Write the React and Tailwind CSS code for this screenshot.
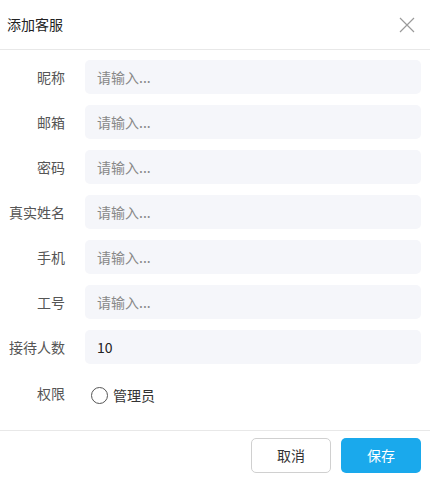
import { useState } from 'react'

const FIELDS = [
  { label: '昵称', value: '' },
  { label: '邮箱', value: '' },
  { label: '密码', value: '' },
  { label: '真实姓名', value: '' },
  { label: '手机', value: '' },
  { label: '工号', value: '' },
  { label: '接待人数', value: '10' },
]

export default function App() {
  const [admin, setAdmin] = useState(false)

  return (
    <div
      className="w-[430px] h-[482px] bg-white text-[#333] flex flex-col"
      style={{ fontFamily: '"Noto Sans CJK SC", "Noto Sans", sans-serif' }}
    >
      {/* Header */}
      <div className="h-[50px] flex items-center justify-between pl-[7px] pr-[15px] border-b border-[#e8e8e8] flex-shrink-0">
        <span className="text-[14px] text-[#222] leading-none -mt-[2px]">添加客服</span>
        <button className="w-[16px] h-[16px] flex items-center justify-center">
          <svg width="16" height="16" viewBox="0 0 16 16" fill="none" stroke="#9a9a9a" strokeWidth="1.2">
            <path d="M1 1 L15 15 M15 1 L1 15" />
          </svg>
        </button>
      </div>

      {/* Form */}
      <div className="flex-1 pt-[10px] pr-[9px] flex flex-col gap-[11px]">
        {FIELDS.map(f => (
          <div key={f.label} className="flex items-center gap-[20px]">
            <label className="w-[65px] text-right text-[14px] text-[#555] flex-shrink-0">{f.label}</label>
            <input
              defaultValue={f.value}
              placeholder="请输入..."
              className="flex-1 h-[34px] rounded-[5px] bg-[#f5f6fa] px-[12px] text-[14px] text-[#222] placeholder:text-[#888] outline-none"
            />
          </div>
        ))}
        <div className="flex items-center gap-[20px] h-[36px]">
          <label className="w-[65px] text-right text-[14px] text-[#555] flex-shrink-0">权限</label>
          <button onClick={() => setAdmin(a => !a)} className="flex items-center gap-[5px] ml-[6px] mt-[4px]">
            <span className="w-[17px] h-[17px] rounded-full border border-[#555] flex items-center justify-center">
              {admin && <span className="w-[8px] h-[8px] rounded-full bg-[#1aa9ec]" />}
            </span>
            <span className="text-[14px] text-[#333]">管理员</span>
          </button>
        </div>
      </div>

      {/* Footer */}
      <div className="h-[52px] border-t border-[#e8e8e8] flex items-start justify-end gap-[10px] pt-[7px] pr-[9px] flex-shrink-0">
        <button className="w-[80px] h-[35px] rounded-[5px] border border-[#d0d0d0] bg-white text-[14px] text-[#333]">
          取消
        </button>
        <button className="w-[80px] h-[35px] rounded-[5px] bg-[#1aa9ec] text-[14px] text-white">
          保存
        </button>
      </div>
    </div>
  )
}
